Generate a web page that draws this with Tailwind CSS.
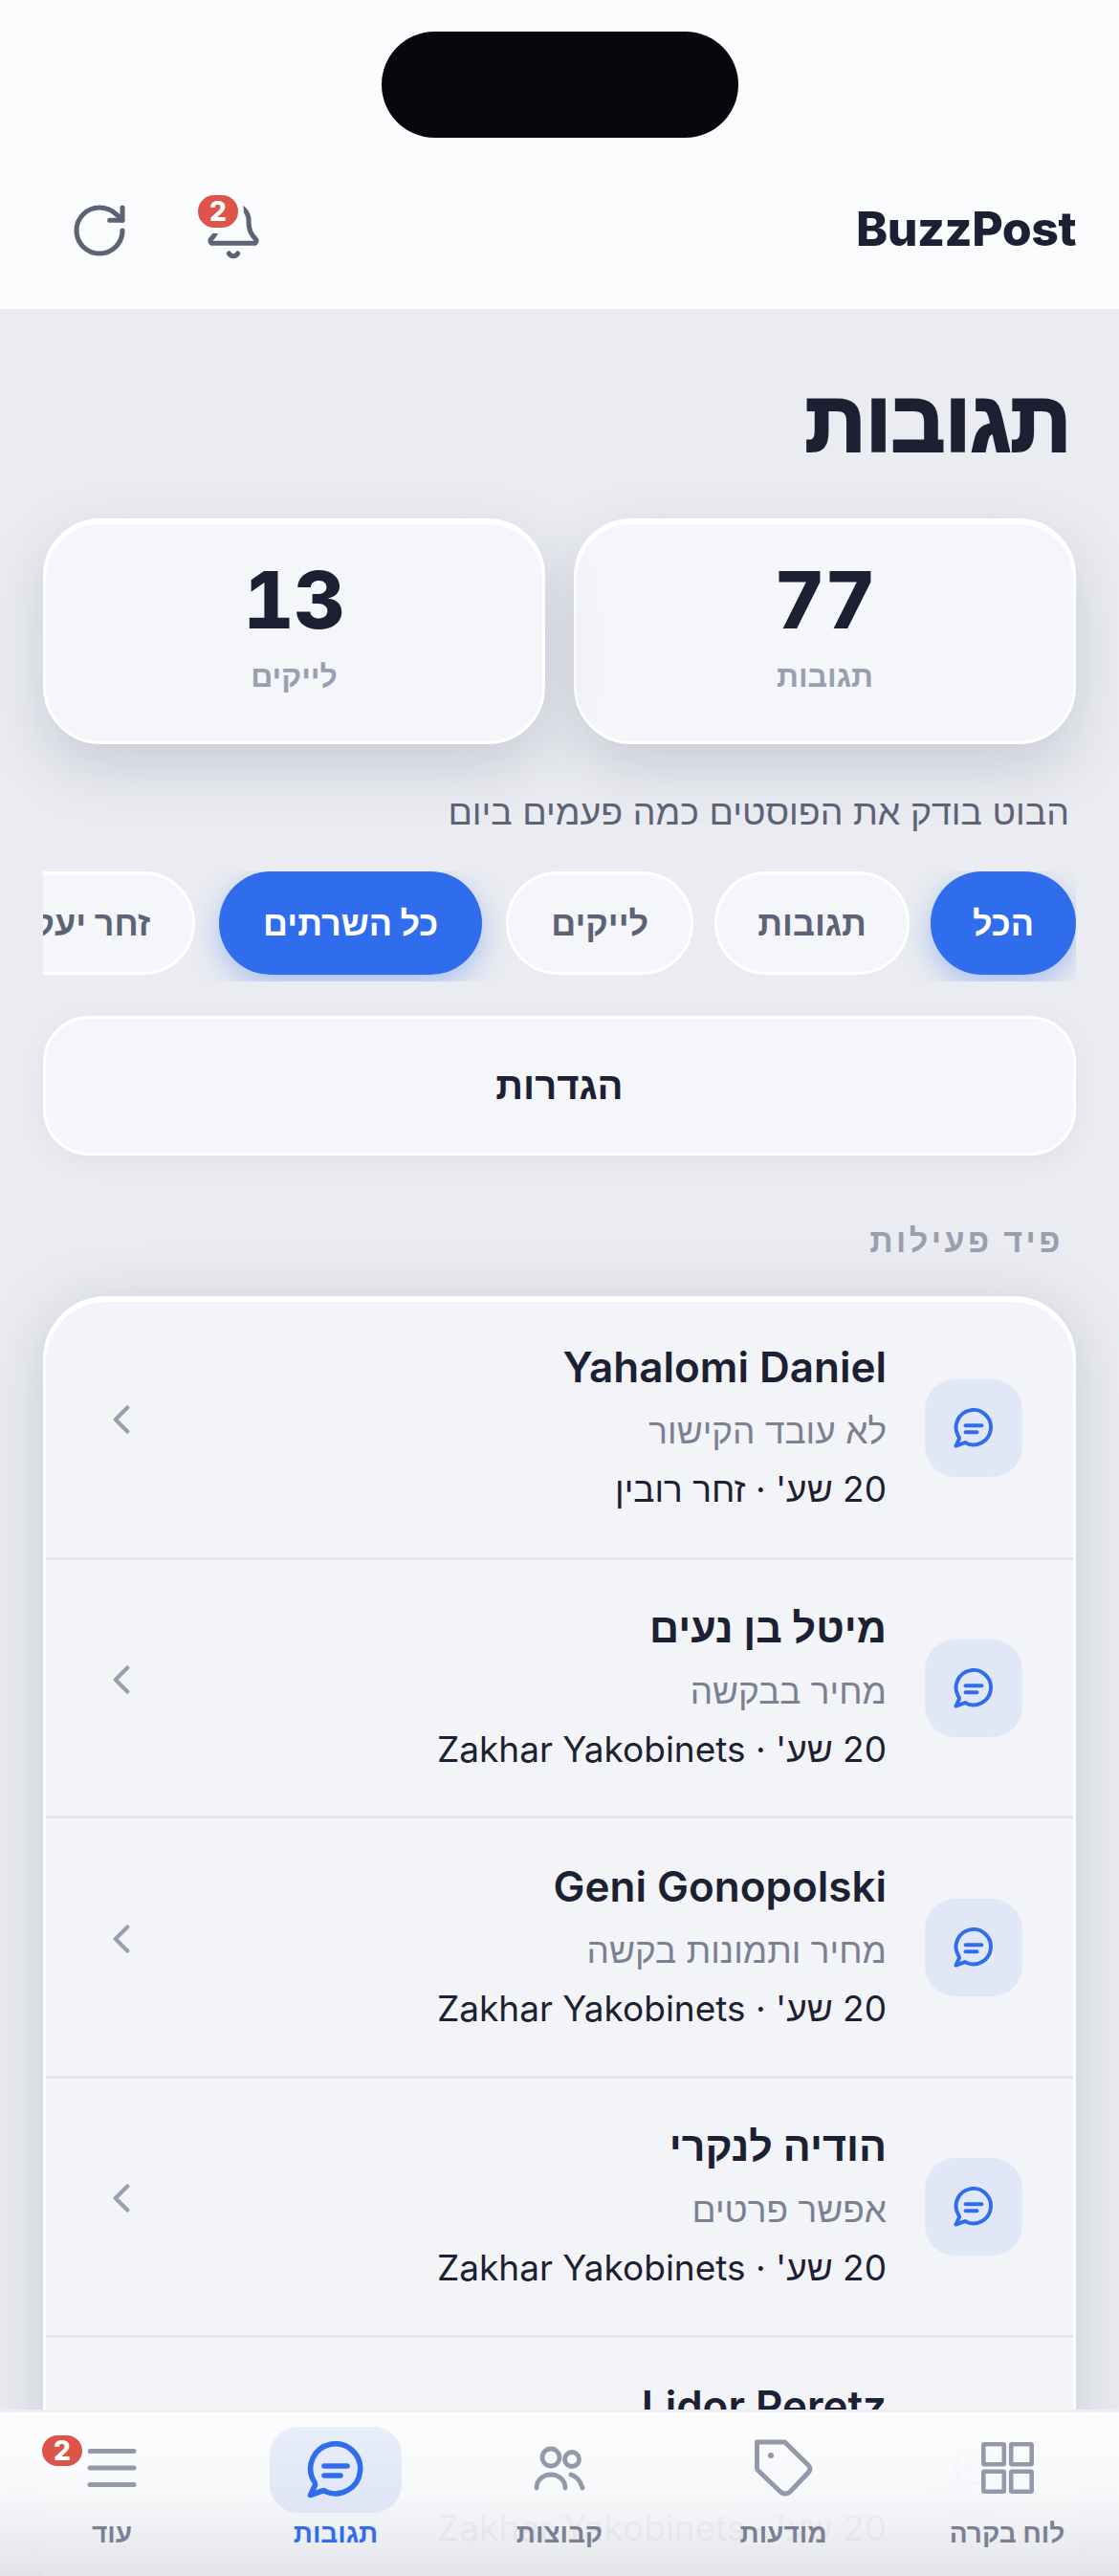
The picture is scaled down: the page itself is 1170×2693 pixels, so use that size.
<!DOCTYPE html>
<html lang="he" dir="rtl">
<head>
  <meta charset="UTF-8" />
  <meta name="viewport" content="width=device-width, initial-scale=1.0" />
  <title>BuzzPost - תגובות</title>
  <script src="https://cdn.jsdelivr.net/npm/@tailwindcss/browser@4"></script>
</head>
<body class="font-['Inter','Liberation_Sans',sans-serif] text-[#1c2033]">
<div class="relative h-[2693px] w-[1170px] overflow-hidden bg-[#eaecf1]">

  <!-- header -->
  <header class="relative h-[323px] bg-[#fbfcfe]">
    <div class="flex justify-center pt-[33px]">
      <div class="h-[111px] w-[373px] rounded-full bg-[#06080c]"></div>
    </div>
    <div dir="ltr" class="mt-[65px] flex items-center justify-between pl-[72px] pr-[45px]">
      <div class="flex items-center gap-[76px]">
        <svg class="h-[64px] w-[64px] text-[#5d6277]" viewBox="0 0 24 24" fill="none" stroke="currentColor" stroke-width="1.9" stroke-linecap="round" stroke-linejoin="round"><path d="M21 12a9 9 0 1 1-9-9c2.52 0 4.93 1 6.74 2.74L21 8"/><path d="M21 3v5h-5"/></svg>
        <div class="relative h-[64px] w-[64px]">
          <svg class="h-[64px] w-[64px] text-[#5d6277]" viewBox="0 0 24 24" fill="none" stroke="currentColor" stroke-width="1.9" stroke-linecap="round" stroke-linejoin="round"><path d="M10.268 21a2 2 0 0 0 3.464 0"/><path d="M3.262 15.326A1 1 0 0 0 4 17h16a1 1 0 0 0 .74-1.673C19.41 13.956 18 12.499 18 8A6 6 0 0 0 6 8c0 4.499-1.411 5.956-2.738 7.326"/></svg>
          <span class="absolute left-[-11px] top-[-11px] flex h-[46px] w-[54px] items-center justify-center rounded-full border-[6px] border-[#fbfcfe] bg-[#dc5548] text-[28px] font-extrabold text-white">2</span>
        </div>
      </div>
      <div class="mb-[4px] text-[50px] font-extrabold leading-none tracking-[-0.5px]">BuzzPost</div>
    </div>
  </header>

  <main class="px-[45px]">
    <h1 class="mt-[59px] pr-[5px] text-[88px] font-black leading-[115px] [-webkit-text-stroke:3px_#1c2033]">תגובות</h1>

    <!-- stats -->
    <div class="mt-[45px] grid grid-cols-2 gap-[30px]">
      <div class="flex h-[236px] flex-col items-center rounded-[60px] border-[3px] border-white bg-[#f5f6fa] pt-[38px] shadow-[inset_0_3px_0_#fff,0_24px_60px_rgba(100,105,135,0.24)]">
        <div class="text-[82px] font-extrabold leading-[90px] tabular-nums">77</div>
        <div class="mt-[14px] text-[32px] font-bold leading-[40px] text-[#9a9fb0]">תגובות</div>
      </div>
      <div class="flex h-[236px] flex-col items-center rounded-[60px] border-[3px] border-white bg-[#f5f6fa] pt-[38px] shadow-[inset_0_3px_0_#fff,0_24px_60px_rgba(100,105,135,0.24)]">
        <div class="text-[82px] font-extrabold leading-[90px] tabular-nums">13</div>
        <div class="mt-[14px] text-[32px] font-bold leading-[40px] text-[#9a9fb0]">לייקים</div>
      </div>
    </div>

    <p class="mt-[46px] pr-[7px] text-[37.5px] leading-[50px] text-[#5d6277]">הבוט בודק את הפוסטים כמה פעמים ביום</p>

    <!-- filter chips -->
    <div class="mt-[37px] flex gap-[22px] overflow-hidden pb-[7px]">
      <button class="h-[108px] shrink-0 rounded-full bg-[#2f6ded] px-[44px] text-[36px] font-bold text-white shadow-[0_10px_30px_rgba(47,109,237,0.35)]">הכל</button>
      <button class="h-[108px] shrink-0 rounded-full border-[3px] border-white bg-[#f5f6fa] px-[42px] text-[36px] font-bold text-[#5d6277]">תגובות</button>
      <button class="h-[108px] shrink-0 rounded-full border-[3px] border-white bg-[#f5f6fa] px-[44px] text-[36px] font-bold text-[#5d6277]">לייקים</button>
      <button class="mr-[3px] h-[108px] shrink-0 rounded-full bg-[#2f6ded] px-[46px] text-[36px] font-bold text-white shadow-[0_10px_30px_rgba(47,109,237,0.35)]">כל השרתים</button>
      <button class="mr-[3px] h-[108px] shrink-0 rounded-full border-[3px] border-white bg-[#f5f6fa] px-[44px] text-[36px] font-bold text-[#5d6277]">זחר יעקובינץ</button>
    </div>

    <button class="mt-[36px] h-[146px] w-full rounded-[48px] border-[3px] border-white bg-[#f5f6fa] text-[40px] font-bold shadow-[0_6px_24px_rgba(100,105,135,0.08)]">הגדרות</button>

    <div class="mt-[69px] pr-[13px] text-[34px] font-bold leading-[40px] tracking-[3.5px] text-[#9a9fb0]">פיד פעילות</div>

    <!-- activity feed -->
    <div class="mt-[38px] rounded-t-[66px] border-[3px] border-white bg-[#f3f4f8] shadow-[inset_0_3px_0_#fff,0_10px_60px_rgba(100,105,135,0.25)]">
      <div class="flex h-[273px] items-center border-b-[3px] border-[#e3e5ea] pl-[54px] pr-[53px]">
        <div class="flex h-[102px] w-[102px] shrink-0 items-center justify-center rounded-[32px] bg-[#e0e7f6]">
          <svg class="h-[42px] w-[42px] text-[#2f6ded]" viewBox="0 0 60 60" fill="none" stroke="currentColor" stroke-width="5.6" stroke-linecap="round" stroke-linejoin="round"><path d="M19 52.5A26 26 0 1 0 7 41.5Q9 44 8.5 46L3.5 56.5L16 52Q18 51 19 52.5Z"/><path d="M18 26H42"/><path d="M18 36H35"/></svg>
        </div>
        <div class="mr-[40px] flex-1 pb-[5px]">
          <div class="text-[44px] font-semibold leading-[60px]">Yahalomi Daniel</div>
          <div class="mt-[12px] text-[37px] leading-[50px] text-[#7b8093]">לא עובד הקישור</div>
          <div class="mt-[11px] text-[37px] leading-[50px]">20 שע' · זחר רובין</div>
        </div>
        <svg class="mb-[18px] h-[50px] w-[50px] shrink-0 text-[#9a9fb0]" viewBox="0 0 24 24" fill="none" stroke="currentColor" stroke-width="2" stroke-linecap="round" stroke-linejoin="round"><path d="m15 18-6-6 6-6"/></svg>
      </div>
      <div class="flex h-[270px] items-center border-b-[3px] border-[#e3e5ea] pl-[54px] pr-[53px]">
        <div class="flex h-[102px] w-[102px] shrink-0 items-center justify-center rounded-[32px] bg-[#e0e7f6]">
          <svg class="h-[42px] w-[42px] text-[#2f6ded]" viewBox="0 0 60 60" fill="none" stroke="currentColor" stroke-width="5.6" stroke-linecap="round" stroke-linejoin="round"><path d="M19 52.5A26 26 0 1 0 7 41.5Q9 44 8.5 46L3.5 56.5L16 52Q18 51 19 52.5Z"/><path d="M18 26H42"/><path d="M18 36H35"/></svg>
        </div>
        <div class="mr-[40px] flex-1 pb-[5px]">
          <div class="text-[43px] font-semibold leading-[60px]">מיטל בן נעים</div>
          <div class="mt-[12px] text-[37px] leading-[50px] text-[#7b8093]">מחיר בבקשה</div>
          <div class="mt-[11px] text-[37px] leading-[50px]">20 שע' · Zakhar Yakobinets</div>
        </div>
        <svg class="mb-[18px] h-[50px] w-[50px] shrink-0 text-[#9a9fb0]" viewBox="0 0 24 24" fill="none" stroke="currentColor" stroke-width="2" stroke-linecap="round" stroke-linejoin="round"><path d="m15 18-6-6 6-6"/></svg>
      </div>
      <div class="flex h-[272px] items-center border-b-[3px] border-[#e3e5ea] pl-[54px] pr-[53px]">
        <div class="flex h-[102px] w-[102px] shrink-0 items-center justify-center rounded-[32px] bg-[#e0e7f6]">
          <svg class="h-[42px] w-[42px] text-[#2f6ded]" viewBox="0 0 60 60" fill="none" stroke="currentColor" stroke-width="5.6" stroke-linecap="round" stroke-linejoin="round"><path d="M19 52.5A26 26 0 1 0 7 41.5Q9 44 8.5 46L3.5 56.5L16 52Q18 51 19 52.5Z"/><path d="M18 26H42"/><path d="M18 36H35"/></svg>
        </div>
        <div class="mr-[40px] flex-1 pb-[5px]">
          <div class="text-[44px] font-semibold leading-[60px]">Geni Gonopolski</div>
          <div class="mt-[12px] text-[37px] leading-[50px] text-[#7b8093]">מחיר ותמונות בקשה</div>
          <div class="mt-[11px] text-[37px] leading-[50px]">20 שע' · Zakhar Yakobinets</div>
        </div>
        <svg class="mb-[18px] h-[50px] w-[50px] shrink-0 text-[#9a9fb0]" viewBox="0 0 24 24" fill="none" stroke="currentColor" stroke-width="2" stroke-linecap="round" stroke-linejoin="round"><path d="m15 18-6-6 6-6"/></svg>
      </div>
      <div class="flex h-[271px] items-center border-b-[3px] border-[#e3e5ea] pl-[54px] pr-[53px]">
        <div class="flex h-[102px] w-[102px] shrink-0 items-center justify-center rounded-[32px] bg-[#e0e7f6]">
          <svg class="h-[42px] w-[42px] text-[#2f6ded]" viewBox="0 0 60 60" fill="none" stroke="currentColor" stroke-width="5.6" stroke-linecap="round" stroke-linejoin="round"><path d="M19 52.5A26 26 0 1 0 7 41.5Q9 44 8.5 46L3.5 56.5L16 52Q18 51 19 52.5Z"/><path d="M18 26H42"/><path d="M18 36H35"/></svg>
        </div>
        <div class="mr-[40px] flex-1 pb-[5px]">
          <div class="text-[43px] font-semibold leading-[60px]">הודיה לנקרי</div>
          <div class="mt-[12px] text-[37px] leading-[50px] text-[#7b8093]">אפשר פרטים</div>
          <div class="mt-[11px] text-[37px] leading-[50px]">20 שע' · Zakhar Yakobinets</div>
        </div>
        <svg class="mb-[18px] h-[50px] w-[50px] shrink-0 text-[#9a9fb0]" viewBox="0 0 24 24" fill="none" stroke="currentColor" stroke-width="2" stroke-linecap="round" stroke-linejoin="round"><path d="m15 18-6-6 6-6"/></svg>
      </div>
      <div class="flex h-[270px] items-center pl-[54px] pr-[53px]">
        <div class="flex h-[102px] w-[102px] shrink-0 items-center justify-center rounded-[32px] bg-[#e0e7f6]">
          <svg class="h-[42px] w-[42px] text-[#2f6ded]" viewBox="0 0 60 60" fill="none" stroke="currentColor" stroke-width="5.6" stroke-linecap="round" stroke-linejoin="round"><path d="M19 52.5A26 26 0 1 0 7 41.5Q9 44 8.5 46L3.5 56.5L16 52Q18 51 19 52.5Z"/><path d="M18 26H42"/><path d="M18 36H35"/></svg>
        </div>
        <div class="mr-[40px] flex-1 pb-[5px]">
          <div class="text-[44px] font-semibold leading-[60px]">Lidor Peretz</div>
          <div class="mt-[12px] text-[37px] leading-[50px] text-[#7b8093]">&nbsp;</div>
          <div class="mt-[11px] text-[37px] leading-[50px]">20 שע' · Zakhar Yakobinets</div>
        </div>
      </div>
    </div>
  </main>

  <!-- bottom nav, floats over the feed -->
  <nav class="absolute inset-x-0 bottom-0 grid h-[174px] grid-cols-5 border-t-[3px] border-[#eeeff2] bg-gradient-to-b from-[#fdfdfe] via-[#f7f8fa]/97 to-[#e3e4e9]/95 text-[28px] font-bold text-[#7b8093]">
    <div class="flex flex-col items-center">
      <div class="flex h-[108px] items-center pt-[8px]">
        <svg class="h-[54px] w-[55px] text-[#9398ab]" viewBox="0 0 55 54" fill="none" stroke="currentColor" stroke-width="4.6" stroke-linejoin="round"><rect x="2.3" y="2.3" width="21.5" height="21" rx="1"/><rect x="31.2" y="2.3" width="21.5" height="21" rx="1"/><rect x="2.3" y="30.7" width="21.5" height="21" rx="1"/><rect x="31.2" y="30.7" width="21.5" height="21" rx="1"/></svg>
      </div>
      <div class="leading-[36px]">לוח בקרה</div>
    </div>
    <div class="flex flex-col items-center">
      <div class="flex h-[108px] items-center pt-[8px]">
        <svg class="h-[62px] w-[62px] text-[#9398ab]" viewBox="0 0 62 62" fill="none" stroke="currentColor" stroke-width="5" stroke-linecap="round" stroke-linejoin="round"><path d="M3.5 4H32.5L57 28Q61 32 57 36L38 56Q33 60 28 56L5 34Q3.5 33 3.5 31Z"/><circle cx="18" cy="18" r="3" fill="currentColor" stroke="none"/></svg>
      </div>
      <div class="leading-[36px]">מודעות</div>
    </div>
    <div class="flex flex-col items-center">
      <div class="flex h-[108px] items-center pt-[8px]">
        <svg class="h-[52px] w-[60px] text-[#9398ab]" viewBox="0 0 60 52" fill="none" stroke="currentColor" stroke-width="4.8" stroke-linecap="round" stroke-linejoin="round"><circle cx="21" cy="15" r="9"/><circle cx="43" cy="17" r="7.5"/><path d="M6 47A15 14 0 0 1 36 47"/><path d="M42 33C48 35 52 40 54 47"/></svg>
      </div>
      <div class="leading-[36px]">קבוצות</div>
    </div>
    <div class="flex flex-col items-center text-[#2f6ded]">
      <div class="h-[108px] pt-[15px]">
        <div class="flex h-[90px] w-[138px] items-center justify-center rounded-[30px] bg-gradient-to-b from-[#e8edfb] to-[#dfe5f5]">
          <svg class="h-[60px] w-[60px]" viewBox="0 0 60 60" fill="none" stroke="currentColor" stroke-width="5.6" stroke-linecap="round" stroke-linejoin="round"><path d="M19 52.5A26 26 0 1 0 7 41.5Q9 44 8.5 46L3.5 56.5L16 52Q18 51 19 52.5Z"/><path d="M18 26H42"/><path d="M18 36H35"/></svg>
        </div>
      </div>
      <div class="leading-[36px]">תגובות</div>
    </div>
    <div class="flex flex-col items-center">
      <div class="relative flex h-[108px] items-center pt-[8px]">
        <svg class="h-[42px] w-[52px] text-[#9398ab]" viewBox="0 0 52 42" fill="none" stroke="currentColor" stroke-width="5" stroke-linecap="round"><path d="M3 3.5H49"/><path d="M3 21H49"/><path d="M3 38.5H49"/></svg>
        <span class="absolute left-[-53px] top-[18px] flex h-[44px] w-[54px] items-center justify-center rounded-full border-[6px] border-[#fbfcfe] bg-[#dc5548] text-[28px] font-extrabold text-white">2</span>
      </div>
      <div class="leading-[36px]">עוד</div>
    </div>
  </nav>
</div>
</body>
</html>
